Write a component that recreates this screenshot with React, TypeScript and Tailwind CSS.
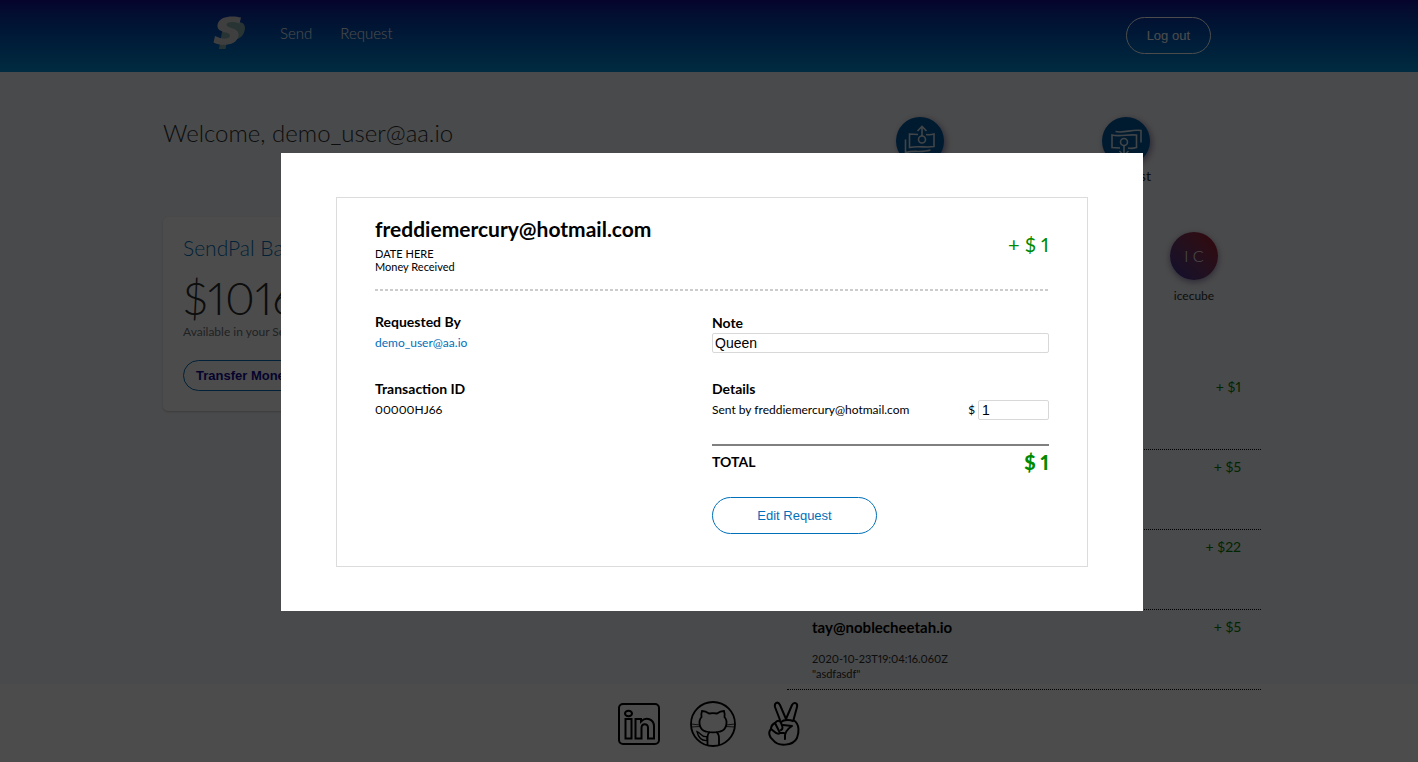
import React from "react";

function SendIcon() {
  return (
    <svg viewBox="0 0 48 48" className="size-12" fill="none" stroke="#fff" strokeOpacity=".85" strokeWidth="1.6" aria-hidden="true">
      <path d="M22 17.500 L13.500 17 V30.500 C22 28.500 30 31 38 29.500 V17 C35 18 33 18 30 17.500" />
      <circle cx="26" cy="22.500" r="3.500" />
      <path d="M26 19 V9.500 M21.500 14 L26 9.500 L30.500 14" />
      <path d="M9.500 22.500 V35.500 C18 33 26 36 34.500 33" />
    </svg>
  );
}

function RequestIcon() {
  return (
    <svg viewBox="0 0 48 48" className="size-12" fill="none" stroke="#fff" strokeOpacity=".85" strokeWidth="1.6" aria-hidden="true">
      <path d="M18 31 L10 30.500 V18 C18 20 26 17 34.500 18 V30.500 C31 31.500 28 31.500 26 31" />
      <circle cx="22" cy="25" r="3.500" />
      <path d="M22 28.500 V38 M17.500 34 L22 38.500 L26.500 34" />
      <path d="M13.500 14.500 C22 16.500 30 12 39 13.500 V25.500" />
    </svg>
  );
}

function Logo() {
  return (
    <svg viewBox="0 0 34 34" className="size-[34px]" aria-hidden="true">
      <path d="M12 6 H25 C31 6 33 10 31.500 15 C30 21 25 24 19 24 H14 L12.500 33 H6 L9 16 Z" fill="#86b0b0" />
      <path d="M28 1.500 C20 -.5 6 -.5 4.500 9 C3.500 18 18 15 17 20 C16 24 8 23 2 20 L.5 26.500 C8 30.500 24 30 25.500 19.500 C26.500 11 13 13 13.500 8.500 C14 5.500 21 5.500 26.500 7.500 Z" fill="#d8d4d8" />
    </svg>
  );
}

function LinkedInIcon() {
  return (
    <svg viewBox="0 0 44 44" className="size-11" fill="none" stroke="#000" strokeWidth="2" aria-hidden="true">
      <rect x="2" y="2" width="40" height="40" rx="4" />
      <ellipse cx="11.500" cy="11.500" rx="3.500" ry="2.800" />
      <path d="M8.500 17 H14.500 V36.500 H8.500 Z M18.500 17 H24 V19.500 C29 14.500 37 17 37 24.500 V36.500 H31 V25.500 C31 21 24.500 21 24.500 26 V36.500 H18.500 Z" />
    </svg>
  );
}

function GitHubIcon() {
  return (
    <svg viewBox="0 0 48 48" className="size-12" fill="none" stroke="#000" strokeWidth="1.8" aria-hidden="true">
      <circle cx="24" cy="24" r="22" />
      <path d="M13 11 C16 11 18 12 20 13.500 C22.500 13 25.500 13 28 13.500 C30 12 32 11 35 11 C36 14 36 15 35.500 17 C39 21 38 30 31 31.500 C27 32.500 21 32.500 17 31.500 C10 30 9 21 12.500 17 C12 15 12 14 13 11 Z" />
      <path d="M18.500 45 V38 C18.500 35 19 33 21 32 M30 45 V38 C30 35 29 33 27 32" />
      <path d="M18 36.500 C13 38 12 33 8 31.500 C9 36 11 41 18 40.500 Z" strokeWidth="1.3" />
      <path d="M2 24 L11 25 M2 27 L11 26.500 M46 24 L37 25 M46 27 L37 26.500" strokeWidth=".8" />
    </svg>
  );
}

function PeaceIcon() {
  return (
    <svg viewBox="0 0 40 48" className="h-12 w-10" fill="none" stroke="#000" strokeWidth="2" strokeLinejoin="round" strokeLinecap="round" aria-hidden="true">
      <path d="M15 20 L10 7 C9 2.500 13 1 15 5 L21 19 L27 5 C29 1.500 33 3 32 7 L28.500 20 C35 24 34 33 32 38 C28 46 13 47 8 40 C4 37 3 32 6 29 C6 26 8 24 10 23 C12 20 15 20 16 23 C18 27 18 29 16 30" />
      <path d="M10 23 L15 33 C12 36 9 31 6 29 M16 22 C19 19 26 20 28 21 M18 25 L27 26 C22 29 19 33 20 39 M15 33 L19 33" />
    </svg>
  );
}

const amounts = ["+ $1", "+ $5", "+ $22"];

function Action({ label, children }: { label: string; children: React.ReactNode }) {
  return (
    <a href={"#" + label.toLowerCase()} className="flex flex-col items-center gap-0.5 text-sm leading-[18px]">
      <span className="rounded-full bg-[#0059a0] shadow-[2px_2px_6px_#9088b0]">{children}</span>
      {label}
    </a>
  );
}

function Dashboard() {
  return (
    <main className="relative z-10 mx-auto grid w-full max-w-[1104px] grid-cols-[minmax(0,1fr)_minmax(0,474px)] gap-[54px] pt-[45px] pl-1.5">
      <section>
        <h1 className="text-2xl leading-[32px] font-light">Welcome, demo_user@aa.io</h1>
        <div className="mt-[68px] rounded-[5px] bg-white px-5 pt-[17px] pb-5 shadow-[0_1px_2px_rgba(0,0,0,0.2)]">
          <h2 className="text-[21px] leading-[28px] font-light text-[#0070ba]">SendPal Balance</h2>
          <p className="mt-2.5 text-[46px] leading-[52px] font-light">$1016.00</p>
          <p className="text-xs leading-[16px]  text-[#6c7378]">Available in your SendPal account</p>
          <button className="mt-5 h-[31px] rounded-full border border-[#0070ba] px-3 font-['Liberation_Sans',sans-serif] text-[13px] font-bold text-[#110a98]">
            Transfer Money
          </button>
        </div>
      </section>
      <section>
        <div className="grid grid-cols-2 pr-8 pl-[30px]">
          <Action label="Send"><SendIcon /></Action>
          <Action label="Request"><RequestIcon /></Action>
        </div>
        <div className="mt-[47px] flex justify-end pr-[43px]">
          <div className="flex w-12 flex-col items-center gap-1.5 text-xs leading-[20px]">
            <span className="flex size-12 items-center justify-center rounded-full bg-linear-to-tr from-[#3b2f9a] to-[#b00018] text-base font-light text-white shadow-[0_2px_6px_#9088b0]">
              I C
            </span>
            icecube
          </div>
        </div>
        <ul className="mt-16 text-sm">
          {amounts.map((amount) => (
            <li key={amount} className="flex h-20 justify-end border-b border-dotted border-black px-5 pt-2 leading-[18px] text-[#008000]">
              {amount}
            </li>
          ))}
          <li className="flex h-20 justify-between border-b border-dotted border-black pt-2 pr-5 pl-[25px]">
            <div>
              <strong className="block text-[15px] leading-[18px] font-bold text-black">tay@noblecheetah.io</strong>
              <p className="mt-[15px] text-[11px] leading-[15px]">2020-10-23T19:04:16.060Z</p>
              <p className="text-[11px] leading-[15px]">"asdfasdf"</p>
            </div>
            <span className="leading-[18px] text-[#008000]">+ $5</span>
          </li>
        </ul>
      </section>
    </main>
  );
}

function RequestDialog() {
  return (
    <div className="fixed inset-0 z-20 flex items-center justify-center bg-black/70 pt-0.5 pl-1.5">
      <div role="dialog" aria-modal="true" aria-labelledby="sender" className="w-[862px] max-w-full bg-white px-[55px] py-11 text-black">
        <form className="border border-[#dcdcdc] px-[38px] pt-[19px] pb-8" onSubmit={(e) => e.preventDefault()}>
          <div className="flex items-start justify-between pb-4">
            <div>
              <h2 id="sender" className="text-[21px] leading-[24px] font-bold">freddiemercury@hotmail.com</h2>
              <p className="mt-[6px] text-[11px] leading-[13px]">DATE HERE</p>
              <p className="text-[11px] leading-[13px]">Money Received</p>
            </div>
            <span className="pt-[15px] text-xl leading-[24px] text-[#008a00]">+ $ 1</span>
          </div>
          <div className="h-0.5 bg-[repeating-linear-gradient(to_right,#cccccc_0_3px,transparent_3px_5px)]" />
          <div className="grid grid-cols-2 pt-[22px] text-xs leading-[16px]">
            <div>
              <h3 className="text-sm leading-[18px] font-bold">Requested By</h3>
              <p className="mt-1 text-[#0070ba]">demo_user@aa.io</p>
              <h3 className="mt-[29px] text-sm leading-[18px] font-bold">Transaction ID</h3>
              <p className="mt-1">00000HJ66</p>
            </div>
            <div>
              <label htmlFor="note" className="mt-px block text-sm leading-[18px] font-bold">Note</label>
              <input id="note" defaultValue="Queen" className="mt-px block h-5 w-full rounded-xs border border-[#d8d8d8] px-0.5 font-['Liberation_Sans',sans-serif] text-sm" />
              <h3 className="mt-[27px] text-sm leading-[18px] font-bold">Details</h3>
              <div className="mt-0.5 flex items-center justify-between">
                <span>Sent by freddiemercury@hotmail.com</span>
                <label className="flex items-center gap-[3px]">
                  $
                  <input defaultValue="1" className="h-5 w-[71px] rounded-xs border border-[#d8d8d8] px-[3px] font-['Liberation_Sans',sans-serif] text-sm" />
                </label>
              </div>
              <div className="mt-6 flex items-center justify-between border-t-2 border-[#808080] pt-1 font-bold">
                <span className="text-sm leading-[24px]">TOTAL</span>
                <span className="text-xl leading-[24px] font-black text-[#008a00]">$ 1</span>
              </div>
              <button className="mt-[23px] h-[37px] w-[165px] rounded-full border border-[#0070ba] font-['Liberation_Sans',sans-serif] text-[13px] text-[#0070ba]">
                Edit Request
              </button>
            </div>
          </div>
        </form>
      </div>
    </div>
  );
}

export default function App() {
  return (
    <div className="min-h-screen bg-[#f5f7fa] font-['Lato',sans-serif] text-[#2c2e2f] proportional-nums">
      <header className="h-[72px] bg-linear-to-b from-[#140896] to-[#0092d8] pl-1.5 text-white">
        <div className="mx-auto flex max-w-[998px] items-start justify-between pt-4">
          <nav className="flex items-center text-[15px] leading-[34px] font-light">
            <a href="#home" aria-label="SendPal"><Logo /></a>
            <a href="#send" className="ml-[33px]">Send</a>
            <a href="#request" className="ml-7">Request</a>
          </nav>
          <button className="mt-px h-[37px] rounded-full border border-white px-5 font-['Liberation_Sans',sans-serif] text-[13px]">Log out</button>
        </div>
      </header>
      <Dashboard />
      <footer className="-mt-[6px] flex h-[78px] items-center justify-center gap-7 bg-white pt-0.5 pl-1">
        <a href="#linkedin" aria-label="LinkedIn"><LinkedInIcon /></a>
        <a href="#github" aria-label="GitHub"><GitHubIcon /></a>
        <a href="#portfolio" aria-label="Portfolio"><PeaceIcon /></a>
      </footer>
      <RequestDialog />
    </div>
  );
}
